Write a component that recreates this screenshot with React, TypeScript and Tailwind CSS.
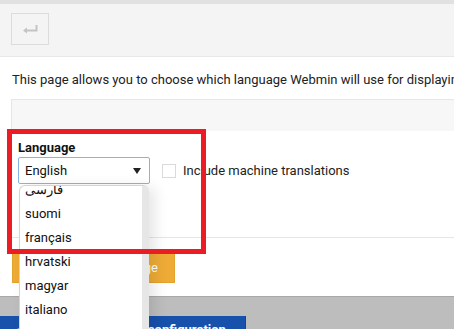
import React from "react";

export default function App() {
  const items = ["فارسی", "suomi", "français", "hrvatski", "magyar", "italiano"];
  return (
    <div
      className="relative w-[454px] h-[329px] overflow-hidden bg-white text-[#222]"
      style={{ fontFamily: "Roboto, 'Noto Sans', sans-serif" }}
    >
      <div className="h-[4px] bg-[#e1e1e1]" />
      <div className="h-[53px] bg-[#f4f4f4] border-b border-[#e8e8e8] pl-[11px] pt-[9px]">
        <div className="w-[38px] h-[32px] border border-[#dcdcdc] flex items-center justify-center">
          <svg width="16" height="10" viewBox="0 0 16 10" fill="none">
            <path d="M14.5 1 V6.5 H3" stroke="#c4c4c4" strokeWidth="2" />
            <path d="M1 6.5 L5 3.5 V9.5 Z" fill="#c4c4c4" />
          </svg>
        </div>
      </div>
      <div className="pl-[11px]">
        <div className="mt-[13px] h-[20px] leading-[20px] text-[13px] pl-[1px] whitespace-nowrap text-[#222]">
          This page allows you to choose which language Webmin will use for displaying titles, prompts and messages
        </div>
        <div className="mt-[9px] h-[32px] bg-[#f7f7f7] border-t border-l border-[#e6e6e6]" />
        <div className="h-[107px] border-b border-[#e6e6e6] pl-[7px] pt-[9px]">
          <div className="text-[13px] font-bold leading-[16px] text-[#111]">Language</div>
          <div className="mt-[1px] flex items-center">
            <div className="w-[132px] h-[27px] border border-[#86b5e4] rounded-[2px] flex items-center justify-between pl-[6px] pr-[8px] text-[13px] text-[#111]">
              <span>English</span>
              <svg width="8" height="6" viewBox="0 0 8 6">
                <path d="M0 0 H8 L4 6 Z" fill="#222" />
              </svg>
            </div>
            <div className="ml-[12px] w-[14px] h-[14px] border border-[#dadada] bg-white" />
            <div className="ml-[7px] text-[13px] text-[#222]">Include machine translations</div>
          </div>
        </div>
        <div className="mt-[14px] pl-[1px]">
          <div className="w-[163px] h-[31px] bg-[#eeab36] border border-[#e3a22c] text-white text-[13px] flex items-center justify-end pr-[16px]">
            Change Language
          </div>
        </div>
      </div>
      <div className="mt-[13px] border-t border-[#a8a8a8] bg-[#bdbdbd] h-[40px] pt-[19px]">
        <div className="w-[246px] h-[32px] bg-[#1751ab] border-r border-[#12449a] text-white text-[13px] font-bold flex items-start pt-[4px] pl-[14px] gap-[16px]">
          <span className="text-[#9fb8e0]">◀</span>
          <span>Return to Webmin configuration</span>
        </div>
      </div>

      <div className="absolute left-[19px] top-[185px] w-[130px] h-[160px] bg-white border-l border-t border-[#d4d4d4] rounded-tl-[6px] rounded-tr-[6px] overflow-hidden shadow-[6px_2px_14px_rgba(0,0,0,0.10)]">
        <div className="absolute right-0 top-0 bottom-0 w-[7px] bg-[#e6e6e6]" />
        <div className="mt-[-8px]">
          {items.map((t) => (
            <div key={t} className="h-[24px] leading-[24px] pl-[5px] text-[13px] text-[#111]">
              {t}
            </div>
          ))}
        </div>
      </div>

      <div className="absolute left-[7px] top-[129px] w-[199px] h-[125px] border-[5px] border-[#ec1c24]" />
    </div>
  );
}
